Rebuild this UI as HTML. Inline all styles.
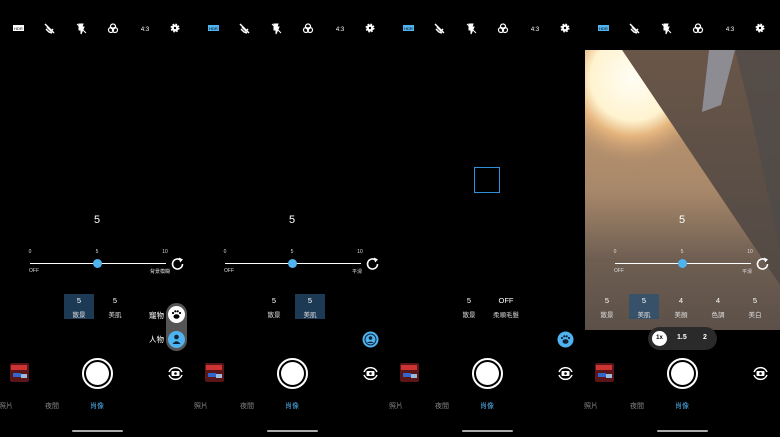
<!DOCTYPE html>
<html><head><meta charset="utf-8"><style>
*{margin:0;padding:0;box-sizing:border-box}
body{width:780px;height:437px;background:#000;overflow:hidden;position:relative;font-family:"Liberation Sans","Noto Sans CJK TC",sans-serif;color:#fff}
.p{position:absolute;top:0;width:195px;height:437px}
.a{position:absolute}
.big{position:absolute;font-size:11px;transform:translateX(-50%);top:214px}
.sm{position:absolute;font-size:5px;color:#ddd;transform:translateX(-50%)}
.track{position:absolute;left:30px;width:136px;top:262.5px;height:1.5px;background:#fff}
.thumb{position:absolute;left:93px;top:259px;width:9px;height:9px;border-radius:50%;background:#4fb3f0}
.shut{position:absolute;left:82px;top:358px;width:31px;height:31px;border-radius:50%;border:2px solid #fff}
.shut:after{content:"";position:absolute;left:2px;top:2px;width:23px;height:23px;border-radius:50%;background:#fff}
.mode{position:absolute;top:401px;font-size:7px;color:#888;transform:translateX(-50%)}
.bar{position:absolute;left:72px;top:430px;width:51px;height:2px;background:#aaa;border-radius:1px}
.sel{position:absolute;top:294px;width:30px;height:25px;background:#1d3a55}
.thn{position:absolute;left:10px;top:363px;width:19px;height:19px;background:#5a1518;border-radius:2px;overflow:hidden}
.thn i{position:absolute;display:block}
.v{position:absolute;top:296px;font-size:7.5px;transform:translateX(-50%)}
.l{position:absolute;top:309px;font-size:6.5px;transform:translateX(-50%);color:#ddd}
</style></head><body>

<div class="p" style="left:0">
 <svg class="a" style="left:0;top:0" width="195" height="40">
  <rect x="13" y="25" width="11" height="6" fill="#fff"/><text x="18.5" y="30" font-size="4" text-anchor="middle" fill="#000" font-family="Liberation Sans">HDR</text>
  <path d="M45 24 L54 33 M47 27 L51 31 L53 29 M46 29 L49 32 L52 33" stroke="#fff" stroke-width="1.5" fill="none"/>
  <path d="M79 24 L79 30 L81 30 L81 34 L84 27 L82 27 L83 24Z M77 24 L86 33" stroke="#fff" stroke-width="1" fill="#fff"/>
  <circle cx="113" cy="26.5" r="2.5" stroke="#fff" fill="none" stroke-width="1.2"/><circle cx="111" cy="30" r="2.5" stroke="#fff" fill="none" stroke-width="1.2"/><circle cx="115" cy="30" r="2.5" stroke="#fff" fill="none" stroke-width="1.2"/>
  <text x="145" y="31" font-size="6" text-anchor="middle" fill="#fff" font-family="Liberation Sans">4:3</text>
  <circle cx="175" cy="28" r="3.5" fill="#fff" stroke="#fff" stroke-width="2" stroke-dasharray="1.5 1.3"/><circle cx="175" cy="28" r="1.2" fill="#000"/>
 </svg>
 <div class="big" style="left:97px">5</div>
 <div class="sm" style="left:30px;top:249px">0</div><div class="sm" style="left:97px;top:249px">5</div><div class="sm" style="left:165px;top:249px">10</div>
 <div class="track"></div><div class="thumb"></div>
 <div class="sm" style="left:34px;top:268px">OFF</div><div class="sm" style="left:160px;top:268px">背景模糊</div>
 <svg class="a" style="left:170px;top:256px" width="16" height="16"><path d="M12.5 8 A5 5 0 1 1 10.5 4" stroke="#fff" stroke-width="1.6" fill="none"/><path d="M9 1.5 L13 3.5 L10 6.5Z" fill="#fff"/></svg>
 <div class="sel" style="left:64px"></div>
 <div class="v" style="left:79px">5</div><div class="l" style="left:79px">散景</div>
 <div class="v" style="left:115px">5</div><div class="l" style="left:115px">美肌</div>
 <div class="a" style="left:166px;top:303px;width:21px;height:48px;border-radius:11px;background:#555"></div>
 <div class="a" style="left:168px;top:306px;width:17px;height:17px;border-radius:50%;background:#fff"></div>
 <div class="a" style="left:168px;top:331px;width:17px;height:17px;border-radius:50%;background:#4fb3f0"></div>
 <svg class="a" style="left:168px;top:306px" width="17" height="42"><g fill="#000"><ellipse cx="8.5" cy="10.5" rx="3" ry="2.3"/><circle cx="5" cy="7" r="1.1"/><circle cx="7.3" cy="5.3" r="1.1"/><circle cx="9.7" cy="5.3" r="1.1"/><circle cx="12" cy="7" r="1.1"/></g><g fill="#123"><circle cx="8.5" cy="31" r="2.3"/><path d="M4.5 38 Q8.5 32.5 12.5 38Z"/></g></svg>
 <div class="a" style="left:149px;top:310px;font-size:7.5px">寵物</div>
 <div class="a" style="left:149px;top:334px;font-size:7.5px">人物</div>
</div>

<div class="p" style="left:195px">
 <svg class="a" style="left:0;top:0" width="195" height="40">
  <rect x="13" y="25" width="11" height="6" fill="#4fb3f0"/><text x="18.5" y="30" font-size="4" text-anchor="middle" fill="#000" font-family="Liberation Sans">HDR</text>
  <path d="M45 24 L54 33 M47 27 L51 31 L53 29 M46 29 L49 32 L52 33" stroke="#fff" stroke-width="1.5" fill="none"/>
  <path d="M79 24 L79 30 L81 30 L81 34 L84 27 L82 27 L83 24Z M77 24 L86 33" stroke="#fff" stroke-width="1" fill="#fff"/>
  <circle cx="113" cy="26.5" r="2.5" stroke="#fff" fill="none" stroke-width="1.2"/><circle cx="111" cy="30" r="2.5" stroke="#fff" fill="none" stroke-width="1.2"/><circle cx="115" cy="30" r="2.5" stroke="#fff" fill="none" stroke-width="1.2"/>
  <text x="145" y="31" font-size="6" text-anchor="middle" fill="#fff" font-family="Liberation Sans">4:3</text>
  <circle cx="175" cy="28" r="3.5" fill="#fff" stroke="#fff" stroke-width="2" stroke-dasharray="1.5 1.3"/><circle cx="175" cy="28" r="1.2" fill="#000"/>
 </svg>
 <div class="big" style="left:97px">5</div>
 <div class="sm" style="left:30px;top:249px">0</div><div class="sm" style="left:97px;top:249px">5</div><div class="sm" style="left:165px;top:249px">10</div>
 <div class="track"></div><div class="thumb"></div>
 <div class="sm" style="left:34px;top:268px">OFF</div><div class="sm" style="left:162px;top:268px">平滑</div>
 <svg class="a" style="left:170px;top:256px" width="16" height="16"><path d="M12.5 8 A5 5 0 1 1 10.5 4" stroke="#fff" stroke-width="1.6" fill="none"/><path d="M9 1.5 L13 3.5 L10 6.5Z" fill="#fff"/></svg>
 <div class="sel" style="left:100px"></div>
 <div class="v" style="left:79px">5</div><div class="l" style="left:79px">散景</div>
 <div class="v" style="left:115px">5</div><div class="l" style="left:115px">美肌</div>
 <svg class="a" style="left:167px;top:331px" width="17" height="17"><circle cx="8.5" cy="8.5" r="8" fill="#4fb3f0"/><circle cx="8.5" cy="8.5" r="5.5" fill="none" stroke="#123" stroke-width="1"/><circle cx="8.5" cy="7" r="1.8" fill="#123"/><path d="M5 12 Q8.5 9 12 12Z" fill="#123"/></svg>
</div>

<div class="p" style="left:390px">
 <svg class="a" style="left:0;top:0" width="195" height="40">
  <rect x="13" y="25" width="11" height="6" fill="#4fb3f0"/><text x="18.5" y="30" font-size="4" text-anchor="middle" fill="#000" font-family="Liberation Sans">HDR</text>
  <path d="M45 24 L54 33 M47 27 L51 31 L53 29 M46 29 L49 32 L52 33" stroke="#fff" stroke-width="1.5" fill="none"/>
  <path d="M79 24 L79 30 L81 30 L81 34 L84 27 L82 27 L83 24Z M77 24 L86 33" stroke="#fff" stroke-width="1" fill="#fff"/>
  <circle cx="113" cy="26.5" r="2.5" stroke="#fff" fill="none" stroke-width="1.2"/><circle cx="111" cy="30" r="2.5" stroke="#fff" fill="none" stroke-width="1.2"/><circle cx="115" cy="30" r="2.5" stroke="#fff" fill="none" stroke-width="1.2"/>
  <text x="145" y="31" font-size="6" text-anchor="middle" fill="#fff" font-family="Liberation Sans">4:3</text>
  <circle cx="175" cy="28" r="3.5" fill="#fff" stroke="#fff" stroke-width="2" stroke-dasharray="1.5 1.3"/><circle cx="175" cy="28" r="1.2" fill="#000"/>
 </svg>
 <div class="a" style="left:84px;top:167px;width:26px;height:26px;border:1px solid #2f8fd8"></div>
 <div class="v" style="left:79px">5</div><div class="l" style="left:79px">散景</div>
 <div class="v" style="left:116px">OFF</div><div class="l" style="left:116px">柔順毛髮</div>
 <svg class="a" style="left:167px;top:331px" width="17" height="17"><circle cx="8.5" cy="8.5" r="8" fill="#4fb3f0"/><g fill="#123"><ellipse cx="8.5" cy="10.5" rx="3" ry="2.3"/><circle cx="5" cy="7" r="1.1"/><circle cx="7.3" cy="5.3" r="1.1"/><circle cx="9.7" cy="5.3" r="1.1"/><circle cx="12" cy="7" r="1.1"/></g></svg>
</div>

<div class="p" style="left:585px">
 <svg class="a" style="left:0;top:50px" width="195" height="280">
  <defs>
   <radialGradient id="g1" cx="48" cy="28" r="85" gradientUnits="userSpaceOnUse"><stop offset="0" stop-color="#fffef5"/><stop offset="0.5" stop-color="#fff3d0"/><stop offset="0.68" stop-color="#e6b67e"/><stop offset="1" stop-color="#c09670" stop-opacity="0"/></radialGradient>
   <linearGradient id="tan" x1="0" y1="0" x2="0" y2="280" gradientUnits="userSpaceOnUse"><stop offset="0" stop-color="#c89c72"/><stop offset="0.5" stop-color="#a8886a"/><stop offset="0.75" stop-color="#6e5e52"/><stop offset="1" stop-color="#5c5048"/></linearGradient>
   <linearGradient id="dk" x1="0" y1="0" x2="0" y2="280" gradientUnits="userSpaceOnUse"><stop offset="0" stop-color="#6a5648"/><stop offset="0.5" stop-color="#5a4e46"/><stop offset="1" stop-color="#4e4844"/></linearGradient>
  </defs>
  <rect width="195" height="280" fill="url(#dk)"/>
  <polygon points="0,0 37,0 195,235 195,280 0,280" fill="url(#tan)"/>
  <polygon points="0,0 37,0 130,138 0,138" fill="url(#g1)"/>
  <polygon points="124,0 150,0 136,55 117,62" fill="#8c8c92"/>
  <polygon points="150,0 195,0 195,200 165,60" fill="#4e4a48" opacity="0.7"/>
 </svg>
 <svg class="a" style="left:0;top:0" width="195" height="40">
  <rect x="13" y="25" width="11" height="6" fill="#4fb3f0"/><text x="18.5" y="30" font-size="4" text-anchor="middle" fill="#000" font-family="Liberation Sans">HDR</text>
  <path d="M45 24 L54 33 M47 27 L51 31 L53 29 M46 29 L49 32 L52 33" stroke="#fff" stroke-width="1.5" fill="none"/>
  <path d="M79 24 L79 30 L81 30 L81 34 L84 27 L82 27 L83 24Z M77 24 L86 33" stroke="#fff" stroke-width="1" fill="#fff"/>
  <circle cx="113" cy="26.5" r="2.5" stroke="#fff" fill="none" stroke-width="1.2"/><circle cx="111" cy="30" r="2.5" stroke="#fff" fill="none" stroke-width="1.2"/><circle cx="115" cy="30" r="2.5" stroke="#fff" fill="none" stroke-width="1.2"/>
  <text x="145" y="31" font-size="6" text-anchor="middle" fill="#fff" font-family="Liberation Sans">4:3</text>
  <circle cx="175" cy="28" r="3.5" fill="#fff" stroke="#fff" stroke-width="2" stroke-dasharray="1.5 1.3"/><circle cx="175" cy="28" r="1.2" fill="#000"/>
 </svg>
 <div class="big" style="left:97px">5</div>
 <div class="sm" style="left:30px;top:249px">0</div><div class="sm" style="left:97px;top:249px">5</div><div class="sm" style="left:165px;top:249px">10</div>
 <div class="track"></div><div class="thumb"></div>
 <div class="sm" style="left:34px;top:268px">OFF</div><div class="sm" style="left:162px;top:268px">平滑</div>
 <svg class="a" style="left:170px;top:256px" width="16" height="16"><path d="M12.5 8 A5 5 0 1 1 10.5 4" stroke="#fff" stroke-width="1.6" fill="none"/><path d="M9 1.5 L13 3.5 L10 6.5Z" fill="#fff"/></svg>
 <div class="sel" style="left:44px;background:rgba(40,80,115,0.75)"></div>
 <div class="v" style="left:22px">5</div><div class="l" style="left:22px">散景</div>
 <div class="v" style="left:59px">5</div><div class="l" style="left:59px">美肌</div>
 <div class="v" style="left:96px">4</div><div class="l" style="left:96px">美顏</div>
 <div class="v" style="left:133px">4</div><div class="l" style="left:133px">色調</div>
 <div class="v" style="left:170px">5</div><div class="l" style="left:170px">美白</div>
 <div class="a" style="left:63px;top:327px;width:69px;height:23px;border-radius:12px;background:#2a2a2a"></div>
 <div class="a" style="left:67px;top:331px;width:15px;height:15px;border-radius:50%;background:#fff;color:#000;font-size:6px;font-weight:bold;text-align:center;line-height:15px">1x</div>
 <div class="a" style="left:92px;top:334px;font-size:7px;font-weight:bold">1.5</div>
 <div class="a" style="left:118px;top:334px;font-size:7px;font-weight:bold">2</div>
</div>

<div class="p" style="left:0"><div class="thn"><i style="left:1px;top:2px;width:16px;height:5px;background:#c33"></i><i style="left:3px;top:10px;width:8px;height:4px;background:#36c"></i><i style="left:11px;top:11px;width:6px;height:4px;background:#9bd"></i></div><div class="shut"></div>
<svg class="a" style="left:166px;top:364px" width="19" height="19"><path d="M3 8 A7 7 0 0 1 16 8" stroke="#fff" stroke-width="1.5" fill="none"/><path d="M16 11 A7 7 0 0 1 3 11" stroke="#fff" stroke-width="1.5" fill="none"/><rect x="5.5" y="7" width="8" height="5" rx="1" fill="#fff"/><circle cx="9.5" cy="9.5" r="1.3" fill="#000"/></svg>
<div class="mode" style="left:6px">照片</div><div class="mode" style="left:52px">夜間</div><div class="mode" style="left:97px;color:#4fb3f0">肖像</div><div class="bar"></div></div>
<div class="p" style="left:195px"><div class="thn"><i style="left:1px;top:2px;width:16px;height:5px;background:#c33"></i><i style="left:3px;top:10px;width:8px;height:4px;background:#36c"></i><i style="left:11px;top:11px;width:6px;height:4px;background:#9bd"></i></div><div class="shut"></div>
<svg class="a" style="left:166px;top:364px" width="19" height="19"><path d="M3 8 A7 7 0 0 1 16 8" stroke="#fff" stroke-width="1.5" fill="none"/><path d="M16 11 A7 7 0 0 1 3 11" stroke="#fff" stroke-width="1.5" fill="none"/><rect x="5.5" y="7" width="8" height="5" rx="1" fill="#fff"/><circle cx="9.5" cy="9.5" r="1.3" fill="#000"/></svg>
<div class="mode" style="left:6px">照片</div><div class="mode" style="left:52px">夜間</div><div class="mode" style="left:97px;color:#4fb3f0">肖像</div><div class="bar"></div></div>
<div class="p" style="left:390px"><div class="thn"><i style="left:1px;top:2px;width:16px;height:5px;background:#c33"></i><i style="left:3px;top:10px;width:8px;height:4px;background:#36c"></i><i style="left:11px;top:11px;width:6px;height:4px;background:#9bd"></i></div><div class="shut"></div>
<svg class="a" style="left:166px;top:364px" width="19" height="19"><path d="M3 8 A7 7 0 0 1 16 8" stroke="#fff" stroke-width="1.5" fill="none"/><path d="M16 11 A7 7 0 0 1 3 11" stroke="#fff" stroke-width="1.5" fill="none"/><rect x="5.5" y="7" width="8" height="5" rx="1" fill="#fff"/><circle cx="9.5" cy="9.5" r="1.3" fill="#000"/></svg>
<div class="mode" style="left:6px">照片</div><div class="mode" style="left:52px">夜間</div><div class="mode" style="left:97px;color:#4fb3f0">肖像</div><div class="bar"></div></div>
<div class="p" style="left:585px"><div class="thn"><i style="left:1px;top:2px;width:16px;height:5px;background:#c33"></i><i style="left:3px;top:10px;width:8px;height:4px;background:#36c"></i><i style="left:11px;top:11px;width:6px;height:4px;background:#9bd"></i></div><div class="shut"></div>
<svg class="a" style="left:166px;top:364px" width="19" height="19"><path d="M3 8 A7 7 0 0 1 16 8" stroke="#fff" stroke-width="1.5" fill="none"/><path d="M16 11 A7 7 0 0 1 3 11" stroke="#fff" stroke-width="1.5" fill="none"/><rect x="5.5" y="7" width="8" height="5" rx="1" fill="#fff"/><circle cx="9.5" cy="9.5" r="1.3" fill="#000"/></svg>
<div class="mode" style="left:6px">照片</div><div class="mode" style="left:52px">夜間</div><div class="mode" style="left:97px;color:#4fb3f0">肖像</div><div class="bar"></div></div>
</body></html>
